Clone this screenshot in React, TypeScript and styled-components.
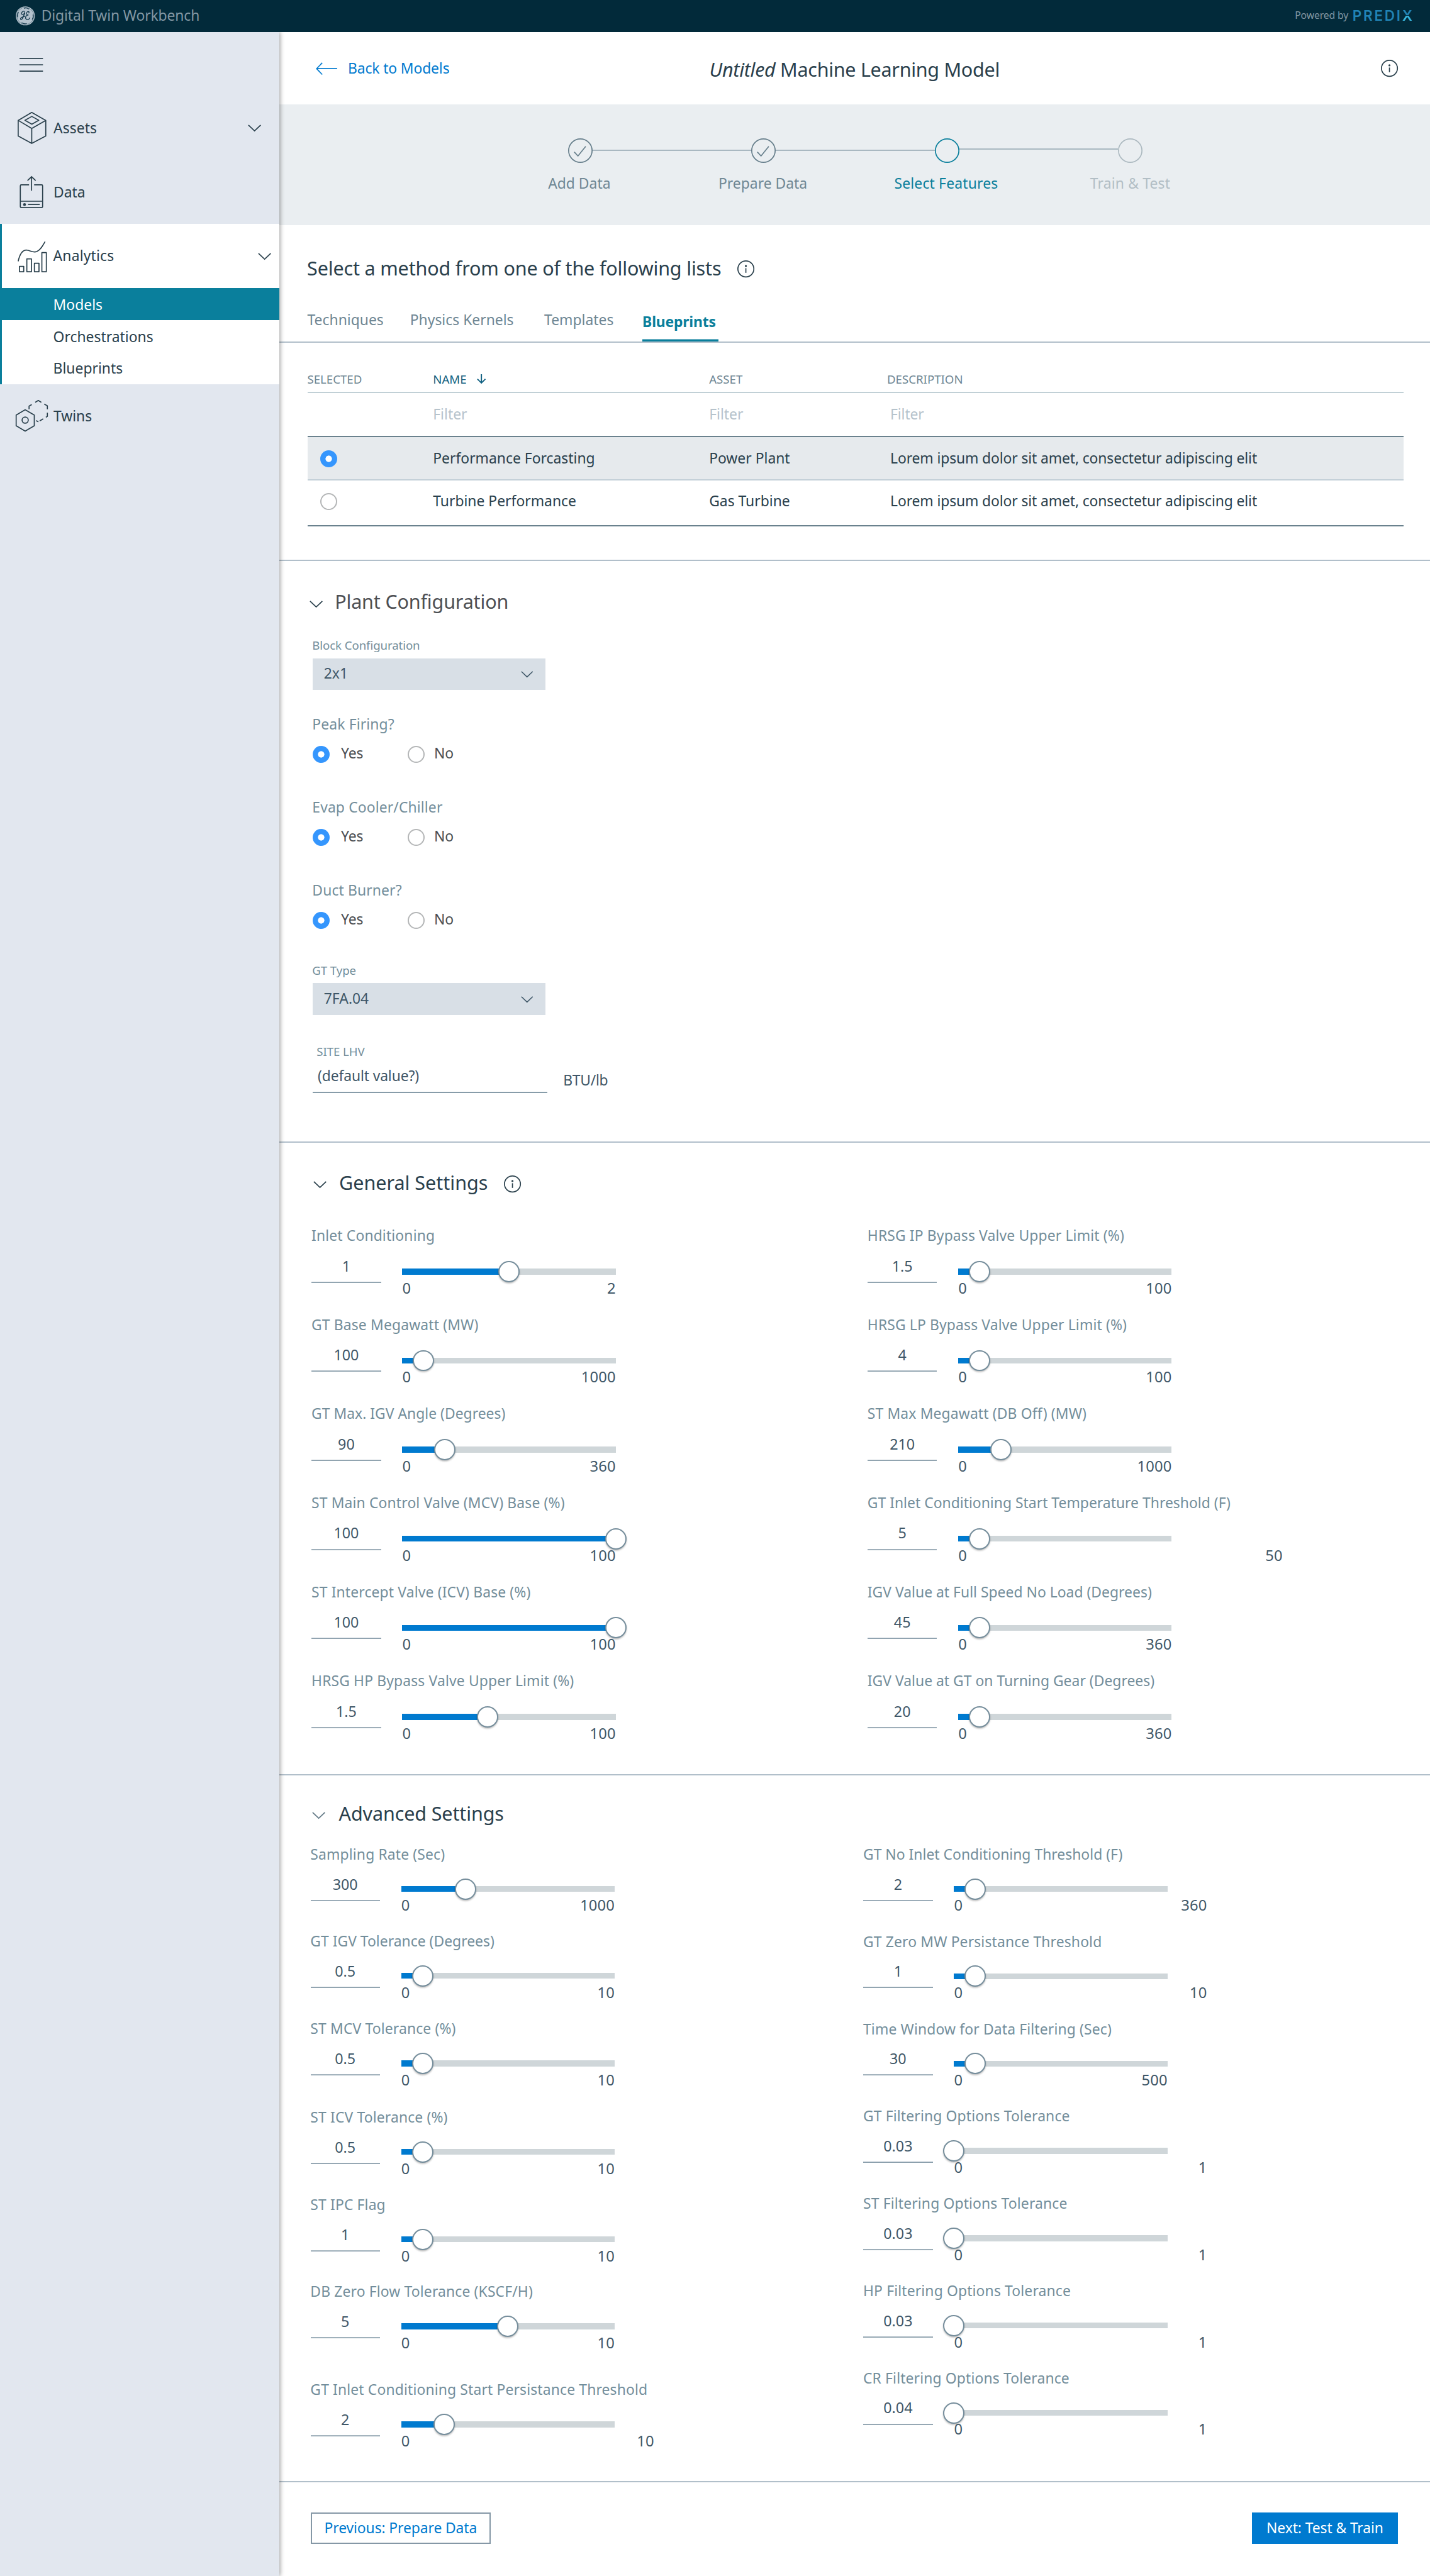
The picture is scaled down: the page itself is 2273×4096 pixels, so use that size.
import React from "react";
import styled, { createGlobalStyle, css } from "styled-components";

/* 1rem is ten design pixels of the 2680px wide artboard. */
const GlobalStyle = createGlobalStyle`
  html { font-size: 8.4813px; }
  body {
    margin: 0;
    background: #fff;
    color: #2a404c;
    font-family: "Noto Sans", "Open Sans", sans-serif;
    -webkit-font-smoothing: antialiased;
  }
  *, *::before, *::after { box-sizing: border-box; }
`;

const color = {
  ink: "#2a404c",
  value: "#3f5768",
  label: "#738e9b",
  muted: "#6f8794",
  teal: "#0a7f9c",
  blue: "#007acf",
  rule: "#b1bfca",
};

const body = css`
  padding-top: 0.2rem;
  font-size: 2.7rem;
  line-height: 3.4rem;
  white-space: nowrap;
`;
const small = css`
  font-size: 2.2rem;
  line-height: 3rem;
  white-space: nowrap;
`;
/* A crisp two pixel line that takes up 0.2rem of the column. */
const hairline = css`
  height: 2px;
  margin-bottom: calc(0.2rem - 2px);
`;

const Page = styled.div`
  display: flex;
  flex-direction: column;
  height: 100vh;
  overflow: hidden;
`;

/* ---------- top bar ---------- */
const TopBar = styled.header`
  position: relative;
  z-index: 2;
  display: flex;
  align-items: flex-start;
  flex: none;
  height: 6rem;
  padding: 0 3.3rem 0 3rem;
  background: #022a3a;
  color: #8397a3;
`;
const LogoSvg = styled.svg`
  width: 3.6rem;
  height: 3.6rem;
  margin-top: 1.2rem;
`;
const Product = styled.span`
  ${body}
  margin-left: 1.15rem;
  line-height: 5.5rem;
  letter-spacing: -0.015rem;
`;
const Powered = styled.span`
  margin-left: auto;
  font-size: 1.85rem;
  line-height: 5.8rem;
  letter-spacing: -0.01rem;
  white-space: nowrap;
`;
const Predix = styled.span`
  margin-left: 0.75rem;
  font-family: Inter, "Noto Sans", sans-serif;
  font-size: 2.65rem;
  font-weight: 600;
  line-height: 5.9rem;
  letter-spacing: 0.33rem;
  color: #2183b4;
  white-space: nowrap;
`;
const PredixX = styled.span`
  letter-spacing: 0;
  color: transparent;
  background: linear-gradient(#2183b4 0 48%, transparent 48% 52%, #36b4dc 52%);
  background-clip: text;
  -webkit-background-clip: text;
`;

/* ---------- sidebar ---------- */
const Columns = styled.div`
  display: flex;
  flex: 1;
  min-height: 0;
`;
const Sidebar = styled.nav`
  position: relative;
  z-index: 1;
  flex: none;
  width: 52.4rem;
  background: #e2e7ef;
  box-shadow: 0.2rem 0 0.8rem rgba(0, 0, 0, 0.4);
`;
const MenuToggle = styled.div`
  display: flex;
  align-items: center;
  height: 12rem;
  padding: 0.2rem 0 0 3.6rem;
`;
const NavItem = styled.div<{ $inset?: string; $end?: string }>`
  display: flex;
  align-items: center;
  height: 12rem;
  padding-left: ${(p) => p.$inset ?? "3rem"};
  padding-right: ${(p) => p.$end ?? "3.4rem"};
`;
const NavLabel = styled.span<{ $ls?: string }>`
  ${body}
  flex: 1;
  margin-left: 1.02rem;
  letter-spacing: ${(p) => p.$ls ?? "0"};
`;
const NavGroup = styled.div`
  border-left: 0.4rem solid ${color.teal};
  background: #fff;
`;
const SubItem = styled.div<{ $active?: boolean }>`
  ${body}
  height: 6rem;
  padding-left: 9.62rem;
  line-height: 5.8rem;
  background: ${(p) => (p.$active ? color.teal : "transparent")};
  color: ${(p) => (p.$active ? "#fff" : color.ink)};
`;
const Icon = styled.svg<{ $w: number; $h: number; $c?: string; $sw?: number }>`
  flex: none;
  display: block;
  width: ${(p) => p.$w}rem;
  height: ${(p) => p.$h}rem;
  overflow: visible;
  fill: none;
  stroke: ${(p) => p.$c ?? color.ink};
  stroke-width: ${(p) => p.$sw ?? 2};
`;

/* ---------- main area ---------- */
const Main = styled.main`
  flex: 1;
  min-width: 0;
`;
const Rule = styled.div`
  ${hairline}
  background: ${color.rule};
`;
const TitleBar = styled.div`
  display: grid;
  grid-template-columns: 1fr auto 1fr;
  align-items: center;
  height: 13.6rem;
  padding: 0 6rem 0 6.8rem;
`;
const BackLink = styled.a`
  ${body}
  display: flex;
  align-items: center;
  gap: 2rem;
  letter-spacing: -0.015rem;
  color: ${color.blue};
`;
const Title = styled.h1`
  margin: 0.3rem 1.3rem 0 0.4rem;
  font-size: 3.6rem;
  font-weight: 400;
  line-height: 5rem;
  letter-spacing: -0.035rem;
  white-space: nowrap;
`;
const TitleEnd = styled.div`
  display: flex;
  justify-content: flex-end;
`;
const Stepper = styled.div`
  display: flex;
  height: 22.6rem;
  padding: 6.3rem 0 0 39.2rem;
  background: #eaeef1;
`;
const Step = styled.div`
  width: 34.35rem;
`;
const StepTrack = styled.div`
  display: flex;
  align-items: center;
`;
const StepLine = styled.div<{ $shown: boolean; $raised?: boolean }>`
  flex: 1;
  height: 2px;
  margin-bottom: ${(p) => (p.$raised ? "0.4rem" : "0")};
  background: ${(p) => (p.$shown ? "#a9b8c1" : "transparent")};
`;
const StepLabel = styled.div<{ $c: string; $pull: number; $ls: string }>`
  ${body}
  margin-top: 2.1rem;
  padding-right: ${(p) => p.$pull}rem;
  text-align: center;
  letter-spacing: ${(p) => p.$ls};
  color: ${(p) => p.$c};
`;

const MethodHead = styled.div`
  display: flex;
  align-items: center;
  height: 16rem;
  padding-left: 5.15rem;
`;
const Heading = styled.h2<{ $ls?: string; $c?: string }>`
  margin: 0;
  font-size: 3.6rem;
  font-weight: 400;
  line-height: 5rem;
  letter-spacing: ${(p) => p.$ls ?? "0"};
  color: ${(p) => p.$c ?? color.ink};
  white-space: nowrap;
`;
const IconSlot = styled.span<{ $left: number; $top?: number }>`
  margin-left: ${(p) => p.$left}rem;
  margin-top: ${(p) => p.$top ?? 0.4}rem;
`;
const Tabs = styled.div`
  display: grid;
  grid-template-columns: 19.25rem 25.15rem 18.4rem 14.2rem;
  height: 5.8rem;
  padding-left: 5.2rem;
`;
const Tab = styled.div<{ $active?: boolean }>`
  ${body}
  padding-top: ${(p) => (p.$active ? "0.45rem" : "0.1rem")};
  height: 5.8rem;
  line-height: 3.5rem;
  font-weight: ${(p) => (p.$active ? 700 : 400)};
  letter-spacing: ${(p) => (p.$active ? "-0.02rem" : "0")};
  color: ${(p) => (p.$active ? color.teal : color.muted)};
  box-shadow: ${(p) => (p.$active ? `inset 0 -0.4rem ${color.teal}` : "none")};
`;

const Table = styled.div`
  width: 205.5rem;
  margin: 0 0 6.2rem 5.2rem;
`;
const columns = css`
  display: grid;
  grid-template-columns: 23.55rem 51.75rem 33.35rem 1fr;
`;
const HeadRow = styled.div`
  ${columns}
  ${small}
  align-items: end;
  height: 9.3rem;
  padding-bottom: 0.9rem;
  color: ${color.muted};
`;
const SortHead = styled.span`
  display: flex;
  align-items: center;
  gap: 1.9rem;
  color: #0e5f80;
`;
const FilterRow = styled.div`
  ${columns}
  ${body}
  align-items: center;
  height: 8rem;
  color: #b6c3cc;
`;
const BodyRow = styled.div<{ $selected?: boolean }>`
  ${columns}
  ${body}
  align-items: center;
  height: ${(p) => (p.$selected ? "8rem" : "8.4rem")};
  padding-top: ${(p) => (p.$selected ? "0.2rem" : "0")};
  padding-bottom: ${(p) => (p.$selected ? "0" : "0.5rem")};
  background: ${(p) => (p.$selected ? "#e6eaed" : "#fff")};
`;
const TableRule = styled.div<{ $c: string }>`
  ${hairline}
  background: ${(p) => p.$c};
`;
const RadioCell = styled.span`
  padding-left: 2.4rem;
`;
const Desc = styled.span`
  padding-left: 0.6rem;
  letter-spacing: -0.014rem;
`;

const RadioDot = styled.span<{ $on?: boolean }>`
  display: block;
  flex: none;
  width: 3.2rem;
  height: 3.2rem;
  border-radius: 50%;
  background: ${(p) => (p.$on ? "radial-gradient(#fff 0 0.56rem, #3596fd 0.64rem)" : "#fff")};
  border: ${(p) => (p.$on ? "none" : "2px solid #b4b6b7")};
`;

const SectionHead = styled.div<{ $top: number; $left: number; $gap: number }>`
  display: flex;
  align-items: center;
  padding-top: ${(p) => p.$top}rem;
  padding-left: ${(p) => p.$left}rem;
  margin-bottom: ${(p) => p.$gap}rem;
`;

/* ---------- plant form ---------- */
const PlantForm = styled.div`
  display: flex;
  flex-direction: column;
  align-items: flex-start;
  height: 94.5rem;
  padding-left: 6.2rem;
`;
const SmallLabel = styled.div<{ $top?: number; $left?: number }>`
  ${small}
  margin-top: ${(p) => p.$top ?? 0}rem;
  margin-left: ${(p) => p.$left ?? -0.08}rem;
  letter-spacing: -0.01rem;
  color: ${color.label};
`;
const SelectBox = styled.div`
  ${body}
  display: flex;
  align-items: center;
  justify-content: space-between;
  width: 43.6rem;
  height: 6rem;
  margin-top: 0.9rem;
  padding: 0.1rem 2.3rem 0 2.1rem;
  background: #d8dfe6;
  color: ${color.value};
`;
const SelectValue = styled.span`
  margin-bottom: 0.3rem;
`;
const Question = styled.div<{ $top: number }>`
  ${body}
  margin-top: ${(p) => p.$top}rem;
  margin-left: -0.08rem;
  letter-spacing: 0.015rem;
  color: ${color.label};
`;
const RadioRow = styled.div`
  display: flex;
  align-items: center;
  height: 3.2rem;
  margin-top: 2.25rem;
`;
const RadioText = styled.span<{ $w?: number; $gap: number }>`
  ${body}
  width: ${(p) => p.$w ?? 8}rem;
  margin: 0 0 0.4rem ${(p) => p.$gap}rem;
  color: #4a4e52;
`;
const UnitRow = styled.div`
  ${body}
  display: flex;
  color: ${color.value};
`;
const TextField = styled.div`
  width: 44rem;
  height: 6.15rem;
  padding: 1.3rem 0 0 0.95rem;
  letter-spacing: -0.015rem;
  border-bottom: 2px solid #879ca9;
`;
const Unit = styled.span`
  margin: 2.1rem 0 0 2.95rem;
  letter-spacing: -0.03rem;
`;

/* ---------- slider grid ---------- */
const SliderColumns = styled.div<{ $left: number; $h: number; $first: number }>`
  display: grid;
  grid-template-columns: ${(p) => p.$first}rem 1fr;
  height: ${(p) => p.$h}rem;
  padding-left: ${(p) => p.$left}rem;
`;
const SliderItem = styled.div<{ $h: number }>`
  height: ${(p) => p.$h}rem;
`;
const SliderLabel = styled.div<{ $tight?: boolean }>`
  ${body}
  margin-left: -0.03rem;
  letter-spacing: ${(p) => (p.$tight ? "0.002rem" : "0.017rem")};
  color: ${color.label};
`;
const SliderControls = styled.div`
  display: flex;
  gap: 4rem;
`;
const ValueField = styled.div<{ $dense?: boolean }>`
  ${body}
  flex: none;
  width: 13rem;
  height: ${(p) => (p.$dense ? 6.95 : 7.05)}rem;
  padding-top: ${(p) => (p.$dense ? 2.1 : 2.2)}rem;
  font-size: 2.75rem;
  text-align: center;
  color: ${color.value};
  box-shadow: inset 0 -0.2rem #8b9fac;
`;
const TrackColumn = styled.div<{ $dense?: boolean; $w: number }>`
  width: ${(p) => p.$w}rem;
  padding-top: ${(p) => (p.$dense ? 4.15 : 4.4)}rem;
`;
const Track = styled.div`
  position: relative;
  width: 40rem;
  height: 1.1rem;
  background: #cfd6d9;
`;
const Fill = styled.div`
  height: 100%;
  background: ${color.blue};
`;
const Handle = styled.div`
  position: absolute;
  top: -1.45rem;
  width: 4rem;
  height: 4rem;
  margin-left: -2rem;
  border: 2px solid #768e9c;
  border-radius: 50%;
  background: #fff;
  box-shadow: 0 0.2rem 0.3rem rgba(0, 0, 0, 0.25);
`;
const Range = styled.div`
  ${body}
  position: relative;
  display: flex;
  justify-content: space-between;
  margin-top: 0.65rem;
  font-size: 2.8rem;
  letter-spacing: 0.02rem;
  color: ${color.value};
`;

/* ---------- footer ---------- */
const Footer = styled.div`
  display: flex;
  justify-content: space-between;
  padding: 5.7rem 6rem 0 5.8rem;
`;
const Button = styled.button<{ $primary?: boolean }>`
  ${body}
  width: ${(p) => (p.$primary ? 27.4 : 33.8)}rem;
  height: 6rem;
  padding: 0.1rem 0 0;
  border: 2px solid ${(p) => (p.$primary ? color.blue : "#8598a6")};
  background: ${(p) => (p.$primary ? color.blue : "#fff")};
  color: ${(p) => (p.$primary ? "#fff" : color.blue)};
  font-family: inherit;
  letter-spacing: -0.012rem;
`;

/* ---------- icons ---------- */
const Chevron = ({ w = 2.5, c }: { w?: number; c?: string }) => (
  <Icon $w={w} $h={w * 0.52} $c={c} viewBox="0 0 25 13">
    <path d="M1 1 L12.5 12 L24 1" />
  </Icon>
);
const Info = () => (
  <Icon $w={3.2} $h={3.2} viewBox="0 0 32 32">
    <circle cx="16" cy="16" r="15" />
    <circle cx="16" cy="10.6" r="1.9" fill={color.ink} stroke="none" />
    <path d="M16 14.6 V23.4" />
  </Icon>
);
const AssetsIcon = () => (
  <Icon $w={6} $h={6} viewBox="0 0 60 60" strokeLinejoin="round">
    <path d="M30 1 L56.3 15.8 V45 L30 59 L4.6 45 V15.8 Z M4.6 15.8 L30 31 L56.3 15.8 M30 31 V59" />
    <path d="M17.3 15.6 L30.2 8.4 L43.2 15.6 L30.2 23 Z" />
  </Icon>
);
const DataIcon = () => (
  <Icon $w={6} $h={6} viewBox="0 0 60 60">
    <path d="M25 16.3 H10.5 Q8.6 16.3 8.6 18.2 V57 Q8.6 59 10.5 59 H48.5 Q50.4 59 50.4 57 V18.2 Q50.4 16.3 48.5 16.3 H34.5 M8.6 47.2 H50.4 M23 53.3 H45 M29.7 27.5 V1.2 M22 8.3 L29.7 1.2 L37.4 8.3" />
    <circle cx="16.5" cy="53.3" r="2.6" fill={color.ink} stroke="none" />
  </Icon>
);
const AnalyticsIcon = () => (
  <Icon $w={6} $h={6} viewBox="0 0 60 60" strokeLinejoin="round">
    <path d="M4.6 39.5 C8 24 13 18.5 20 18.5 C27 18.5 32 24.5 40 21 C47 17.5 50 11 55 2.5" />
    <path d="M7 49 H15 V59 H7 Z M20.8 35 H29.5 V59 H20.8 Z M35 43.2 H43.6 V59 H35 Z M49 23.2 H57.4 V59 H49 Z" />
  </Icon>
);
const TwinsIcon = () => (
  <Icon $w={6} $h={6} viewBox="0 0 60 60" strokeLinejoin="round">
    <path d="M17.7 18.4 L34.8 28.2 V48.4 L17.7 58.4 L.8 48.4 V28.2 Z" />
    <circle cx="17.7" cy="37.8" r="5.8" />
    <path d="M25 17.5 V11.5 L30 8.5 M36.5 4.4 L42.3 1 L48 4.4 M53.5 7.6 L59.3 10.8 V17.5 M59.3 24 V30.8 L56.5 32.4 M51.5 35.4 L45 39.3 M42.5 41 L38.2 38.6" />
  </Icon>
);
const GeLogo = () => (
  <LogoSvg viewBox="0 0 36 36" fill="none" stroke="#12374a">
    <circle cx="18" cy="18" r="17.8" fill="#b4c2cd" stroke="none" />
    <circle cx="18" cy="18" r="16.1" strokeWidth="0.7" opacity="0.7" />
    <path
      strokeWidth="1.5"
      strokeLinecap="round"
      d="M5 11.5 C3.2 14.5 2.9 18 3.6 20 M24.5 5 C21.5 3.2 18 2.9 16 3.6 M31 24.5 C32.8 21.5 33.1 18 32.4 16 M11.5 31 C14.5 32.8 18 33.1 20 32.4"
    />
    <path
      strokeWidth="1.5"
      strokeLinecap="round"
      d="M16 9.5 C13 8.5 9.5 12.5 11.5 15 C13.5 17 17.5 12.5 16.6 10.5 M17 13.5 C14 18 13.5 24 10.5 25 C7.5 25.5 8.5 20.5 14.5 19.5 L17.5 18.5 M24.5 12.5 C26.5 9.5 22 9 20.5 12 C19.5 14.5 21.5 16.5 23.5 16.3 M23.5 16.3 C19.5 16.5 17.8 20 18.6 22.8 C19.8 26 24.8 25.5 26.6 21.5"
    />
  </LogoSvg>
);

const StepCircle = ({ c, done }: { c: string; done?: boolean }) => (
  <Icon $w={4.6} $h={4.6} $c={c} viewBox="0 0 46 46">
    <circle cx="23" cy="23" r="22" />
    {done && <path d="M11.5 25.5 L18.5 33 L33 15" />}
  </Icon>
);

/* ---------- data ---------- */
const steps = [
  { label: "Add Data", c: color.muted, ring: "#667e8b", done: true, pull: 0.4, ls: "0" },
  { label: "Prepare Data", c: color.muted, ring: "#667e8b", done: true, pull: 0.3, ls: "0" },
  { label: "Select Features", c: color.teal, ring: color.teal, done: false, pull: 0.3, ls: "0.02rem" },
  { label: "Train & Test", c: "#b2bec5", ring: "#acb9c0", done: false, pull: 0, ls: "0.02rem" },
];

type Slider = {
  label: string;
  value: string;
  max: string;
  at: number;
  wide?: number;
  pitch?: number;
  tight?: boolean;
};

const generalLeft: Slider[] = [
  { label: "Inlet Conditioning", value: "1", max: "2", at: 50 },
  { label: "GT Base Megawatt (MW)", value: "100", max: "1000", at: 10 },
  { label: "GT Max. IGV Angle (Degrees)", value: "90", max: "360", at: 20, tight: true },
  { label: "ST Main Control Valve (MCV) Base (%)", value: "100", max: "100", at: 100 },
  { label: "ST Intercept Valve (ICV) Base (%)", value: "100", max: "100", at: 100 },
  { label: "HRSG HP Bypass Valve Upper Limit (%)", value: "1.5", max: "100", at: 40 },
];
const generalRight: Slider[] = [
  { label: "HRSG IP Bypass Valve Upper Limit (%)", value: "1.5", max: "100", at: 10 },
  { label: "HRSG LP Bypass Valve Upper Limit (%)", value: "4", max: "100", at: 10 },
  { label: "ST Max Megawatt (DB Off) (MW)", value: "210", max: "1000", at: 20 },
  {
    label: "GT Inlet Conditioning Start Temperature Threshold (F)",
    value: "5",
    max: "50",
    at: 10,
    wide: 60.8,
    tight: true,
  },
  { label: "IGV Value at Full Speed No Load (Degrees)", value: "45", max: "360", at: 10, tight: true },
  { label: "IGV Value at GT on Turning Gear (Degrees)", value: "20", max: "360", at: 10, tight: true },
];
const advancedLeft: Slider[] = [
  { label: "Sampling Rate (Sec)", value: "300", max: "1000", at: 30, pitch: 16.3 },
  { label: "GT IGV Tolerance (Degrees)", value: "0.5", max: "10", at: 10, pitch: 16.4, tight: true },
  { label: "ST MCV Tolerance (%)", value: "0.5", max: "10", at: 10, pitch: 16.6 },
  { label: "ST ICV Tolerance (%)", value: "0.5", max: "10", at: 10, pitch: 16.4 },
  { label: "ST IPC Flag", value: "1", max: "10", at: 10, pitch: 16.3 },
  { label: "DB Zero Flow Tolerance (KSCF/H)", value: "5", max: "10", at: 50, pitch: 18.4 },
  { label: "GT Inlet Conditioning Start Persistance Threshold", value: "2", max: "10", at: 20, wide: 47.4 },
];
const advancedRight: Slider[] = [
  { label: "GT No Inlet Conditioning Threshold (F)", value: "2", max: "360", at: 10, wide: 47.4, tight: true },
  { label: "GT Zero MW Persistance Threshold", value: "1", max: "10", at: 10, wide: 47.4 },
  { label: "Time Window for Data Filtering (Sec)", value: "30", max: "500", at: 10 },
  { label: "GT Filtering Options Tolerance", value: "0.03", max: "1", at: 0, wide: 47.4 },
  { label: "ST Filtering Options Tolerance", value: "0.03", max: "1", at: 0, wide: 47.4 },
  { label: "HP Filtering Options Tolerance", value: "0.03", max: "1", at: 0, wide: 47.4 },
  { label: "CR Filtering Options Tolerance", value: "0.04", max: "1", at: 0, wide: 47.4 },
];

const SliderList = ({ items, pitch, dense }: { items: Slider[]; pitch: number; dense?: boolean }) => (
  <div>
    {items.map((s) => (
      <SliderItem key={s.label} $h={s.pitch ?? pitch}>
        <SliderLabel $tight={s.tight}>{s.label}</SliderLabel>
        <SliderControls>
          <ValueField $dense={dense}>{s.value}</ValueField>
          <TrackColumn $dense={dense} $w={s.wide ?? 40}>
            <Track>
              <Fill style={{ width: `${s.at}%` }} />
              <Handle style={{ left: `${s.at}%` }} />
            </Track>
            <Range>
              <span>0</span>
              <span>{s.max}</span>
            </Range>
          </TrackColumn>
        </SliderControls>
      </SliderItem>
    ))}
  </div>
);

const YesNo = () => (
  <RadioRow>
    <RadioDot $on />
    <RadioText $w={12.5} $gap={2.1}>
      Yes
    </RadioText>
    <RadioDot />
    <RadioText $gap={1.75}>No</RadioText>
  </RadioRow>
);

export default function App() {
  return (
    <Page>
      <GlobalStyle />
      <TopBar>
        <GeLogo />
        <Product>Digital Twin Workbench</Product>
        <Powered>Powered by</Powered>
        <Predix>
          PREDI<PredixX>X</PredixX>
        </Predix>
      </TopBar>
      <Columns>
        <Sidebar>
          <MenuToggle>
            <Icon $w={4.4} $h={2.6} viewBox="0 0 44 26">
              <path d="M0 1 H44 M0 13 H44 M0 25 H44" />
            </Icon>
          </MenuToggle>
          <NavItem>
            <AssetsIcon />
            <NavLabel $ls="0.01rem">Assets</NavLabel>
            <Chevron />
          </NavItem>
          <NavItem>
            <DataIcon />
            <NavLabel>Data</NavLabel>
          </NavItem>
          <NavGroup>
            <NavItem $inset="2.6rem" $end="1.6rem">
              <AnalyticsIcon />
              <NavLabel $ls="0.02rem">Analytics</NavLabel>
              <Chevron />
            </NavItem>
            <SubItem $active>Models</SubItem>
            <SubItem>Orchestrations</SubItem>
            <SubItem>Blueprints</SubItem>
          </NavGroup>
          <NavItem>
            <TwinsIcon />
            <NavLabel>Twins</NavLabel>
          </NavItem>
        </Sidebar>
        <Main>
          <TitleBar>
            <BackLink>
              <Icon $w={4} $h={2.4} $c={color.blue} viewBox="0 0 40 24">
                <path d="M40 12 H1.5 M12 1 L1.5 12 L12 23" />
              </Icon>
              Back to Models
            </BackLink>
            <Title>
              <i>Untitled</i> Machine Learning Model
            </Title>
            <TitleEnd>
              <Info />
            </TitleEnd>
          </TitleBar>
          <Stepper>
            {steps.map((s, i) => (
              <Step key={s.label}>
                <StepTrack>
                  <StepLine $shown={i > 0} $raised={i === 3} />
                  <StepCircle c={s.ring} done={s.done} />
                  <StepLine $shown={i < 3} $raised={i === 2} />
                </StepTrack>
                <StepLabel $c={s.c} $pull={s.pull} $ls={s.ls}>
                  {s.label}
                </StepLabel>
              </Step>
            ))}
          </Stepper>
          <MethodHead>
            <Heading $ls="-0.02rem">Select a method from one of the following lists</Heading>
            <IconSlot $left={3}>
              <Info />
            </IconSlot>
          </MethodHead>
          <Tabs>
            <Tab>Techniques</Tab>
            <Tab>Physics Kernels</Tab>
            <Tab>Templates</Tab>
            <Tab $active>Blueprints</Tab>
          </Tabs>
          <Rule />
          <Table>
            <HeadRow>
              <span>SELECTED</span>
              <SortHead>
                NAME
                <Icon $w={1.7} $h={1.8} $c="#0e5f80" $sw={2.2} viewBox="0 0 17 18">
                  <path d="M8.5 0 V16.5 M1 9 L8.5 16.5 L16 9" />
                </Icon>
              </SortHead>
              <span>ASSET</span>
              <span>DESCRIPTION</span>
            </HeadRow>
            <TableRule $c="#c1d0d6" />
            <FilterRow>
              <span />
              <span>Filter</span>
              <span>Filter</span>
              <Desc>Filter</Desc>
            </FilterRow>
            <TableRule $c="#6a818d" />
            <BodyRow $selected>
              <RadioCell>
                <RadioDot $on />
              </RadioCell>
              <span>Performance Forcasting</span>
              <span>Power Plant</span>
              <Desc>Lorem ipsum dolor sit amet, consectetur adipiscing elit</Desc>
            </BodyRow>
            <TableRule $c="#c3cfd8" />
            <BodyRow>
              <RadioCell>
                <RadioDot />
              </RadioCell>
              <span>Turbine Performance</span>
              <span>Gas Turbine</span>
              <Desc>Lorem ipsum dolor sit amet, consectetur adipiscing elit</Desc>
            </BodyRow>
            <TableRule $c="#6a818d" />
          </Table>
          <Rule />

          <SectionHead $top={5.2} $left={5.6} $gap={4.2}>
            <IconSlot $left={0} $top={0.8}>
              <Chevron />
            </IconSlot>
            <IconSlot $left={2.25} $top={0}>
              <Heading $ls="-0.02rem" $c="#4d4f53">
                Plant Configuration
              </Heading>
            </IconSlot>
          </SectionHead>
          <PlantForm>
            <SmallLabel>Block Configuration</SmallLabel>
            <SelectBox>
              <SelectValue>2x1</SelectValue>
              <Chevron w={2.3} c={color.value} />
            </SelectBox>
            <Question $top={4.55}>Peak Firing?</Question>
            <YesNo />
            <Question $top={6.55}>Evap Cooler/Chiller</Question>
            <YesNo />
            <Question $top={6.55}>Duct Burner?</Question>
            <YesNo />
            <SmallLabel $top={6.25}>GT Type</SmallLabel>
            <SelectBox>
              <SelectValue>7FA.04</SelectValue>
              <Chevron w={2.3} c={color.value} />
            </SelectBox>
            <SmallLabel $top={5.25} $left={0.75}>
              SITE LHV
            </SmallLabel>
            <UnitRow>
              <TextField>(default value?)</TextField>
              <Unit>BTU/lb</Unit>
            </UnitRow>
          </PlantForm>
          <Rule />

          <SectionHead $top={5} $left={6.3} $gap={5.65}>
            <IconSlot $left={0} $top={0.8}>
              <Chevron />
            </IconSlot>
            <IconSlot $left={2.35} $top={0}>
              <Heading>General Settings</Heading>
            </IconSlot>
            <IconSlot $left={3.05} $top={0.6}>
              <Info />
            </IconSlot>
          </SectionHead>
          <SliderColumns $left={6} $h={102.75} $first={104.2}>
            <SliderList items={generalLeft} pitch={16.7} />
            <SliderList items={generalRight} pitch={16.7} />
          </SliderColumns>
          <Rule />

          <SectionHead $top={4.7} $left={6.1} $gap={3.35}>
            <IconSlot $left={0} $top={0.7}>
              <Chevron c="#5f7683" />
            </IconSlot>
            <IconSlot $left={2.5} $top={0}>
              <Heading $ls="-0.015rem">Advanced Settings</Heading>
            </IconSlot>
          </SectionHead>
          <SliderColumns $left={5.8} $h={119.25} $first={103.6}>
            <SliderList items={advancedLeft} pitch={16.4} dense />
            <SliderList items={advancedRight} pitch={16.37} dense />
          </SliderColumns>
          <Rule />

          <Footer>
            <Button>Previous: Prepare Data</Button>
            <Button $primary>Next: Test &amp; Train</Button>
          </Footer>
        </Main>
      </Columns>
    </Page>
  );
}
